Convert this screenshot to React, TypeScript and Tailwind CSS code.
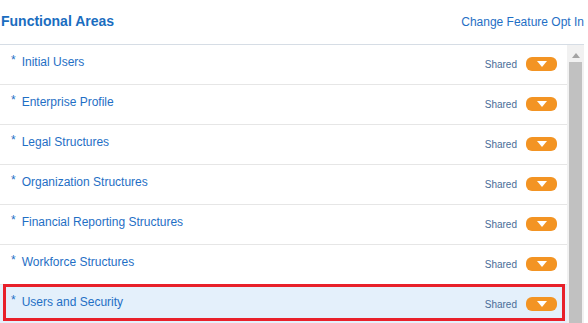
import React from "react";

const areas = [
  "Initial Users",
  "Enterprise Profile",
  "Legal Structures",
  "Organization Structures",
  "Financial Reporting Structures",
  "Workforce Structures",
  "Users and Security",
];

function DropButton() {
  return (
    <button
      type="button"
      className="flex h-[14px] w-[31px] items-center justify-center rounded-[6px] bg-[#f39423]"
    >
      <svg width="10" height="6" viewBox="0 0 10 6">
        <path d="M0 0 L10 0 L5 6 Z" fill="#ffffff" />
      </svg>
    </button>
  );
}

function AreaRow({ name, selected }: { name: string; selected: boolean }) {
  return (
    <div
      className={`relative flex h-[40px] items-start border-b border-[#e6e6e6] ${
        selected ? "bg-[#e4f0fb]" : "bg-white"
      }`}
    >
      <div className="flex items-start pl-[11px] pt-[9px]">
        <span className="mr-[6px] text-[12px] leading-[12px] text-[#1f6fc5]">*</span>
        <span className="mt-[1px] text-[12px] leading-[15px] text-[#1f6fc5]">{name}</span>
      </div>
      <div className="ml-auto flex items-center gap-[9px] pr-[10px] pt-[11px]">
        <span className="mt-[1px] text-[10px] text-[#4a6d98]">Shared</span>
        <DropButton />
      </div>
      {selected && (
        <div className="pointer-events-none absolute left-[3px] right-[2px] top-[-1px] h-[37px] border-[3px] border-[#e8202a]" />
      )}
    </div>
  );
}

export default function App() {
  return (
    <div className="h-[323px] w-[588px] overflow-hidden bg-white font-['Liberation_Sans',Arial,sans-serif]">
      <div className="flex h-[45px] w-[584px] items-start justify-between border-b border-[#d6dde5] pt-[11px]">
        <h1 className="pl-[1px] text-[14px] font-bold text-[#1a6dc0]">Functional Areas</h1>
        <a className="pt-[2px] text-[12px] text-[#1f6fc5]">Change Feature Opt In</a>
      </div>
      <div className="flex">
        <div className="w-[567px]">
          {areas.map((a, i) => (
            <AreaRow key={a} name={a} selected={i === areas.length - 1} />
          ))}
        </div>
        <div className="flex w-[17px] flex-col items-center bg-[#f1f1f1]">
          <svg width="8" height="5" viewBox="0 0 8 5" className="mt-[8px]">
            <path d="M0 5 L8 5 L4 0 Z" fill="#a3a3a3" />
          </svg>
          <div className="mt-[4px] h-[300px] w-[13px] bg-[#c1c1c1]" />
        </div>
      </div>
    </div>
  );
}
